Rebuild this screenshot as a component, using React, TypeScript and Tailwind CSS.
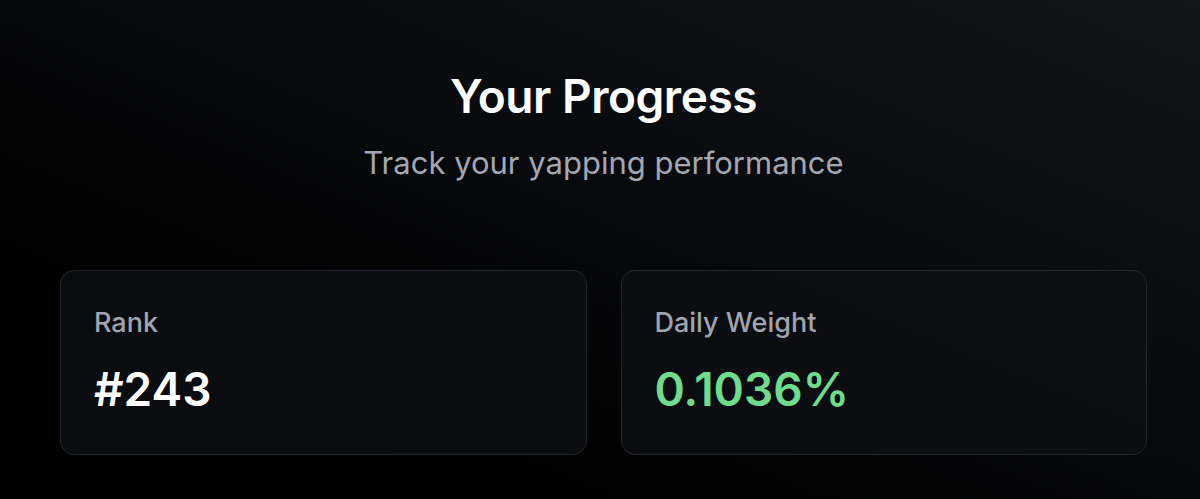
const stats = [
  { label: "Rank", value: "#243", accent: false },
  { label: "Daily Weight", value: "0.1036%", accent: true },
];

export default function App() {
  return (
    <div
      className="min-h-[499px] w-full bg-linear-to-tr from-black via-[#07080a] to-[#13151b] pl-[60px] pr-[53px] pt-[66px]"
      style={{ fontFamily: "Inter, 'Noto Sans', sans-serif" }}
    >
      {/* Heading */}
      <div className="text-center">
        <h1 className="text-[46px] font-semibold leading-[60px] tracking-[-0.01em] text-white">
          Your Progress
        </h1>
        <p className="mt-[16px] text-[31px] leading-[42px] text-[#a3a7b1]">
          Track your yapping performance
        </p>
      </div>

      {/* Stat cards */}
      <div className="mt-[86px] grid grid-cols-2 gap-[34px]">
        {stats.map((s) => (
          <div
            key={s.label}
            className="h-[185px] rounded-[14px] border border-[#24262d] bg-[#0e0f14]/80 px-[33px] pt-[36px]"
          >
            <div className="text-[27px] font-medium leading-[32px] text-[#a0a4ae]">
              {s.label}
            </div>
            <div
              className={`mt-[22px] text-[46px] font-semibold leading-[56px] ${
                s.accent ? "text-[#6fdc8c]" : "text-white"
              }`}
            >
              {s.value}
            </div>
          </div>
        ))}
      </div>
    </div>
  );
}
